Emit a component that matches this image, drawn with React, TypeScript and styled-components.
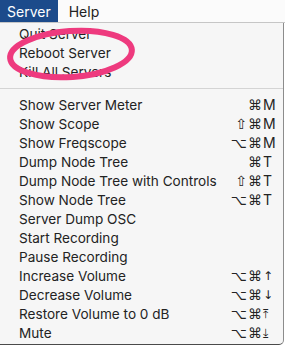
import React from "react";
import styled, { createGlobalStyle } from "styled-components";

const Global = createGlobalStyle`
  html, body { margin: 0; padding: 0; background: #ffffff; }
  body { font-family: "Inter", "Noto Sans", "DejaVu Sans", sans-serif; -webkit-font-smoothing: antialiased; }
`;

const Screen = styled.div`
  position: relative;
  width: 285px;
  height: 347px;
  overflow: hidden;
  background: #ffffff;
`;

const MenuBar = styled.div`
  display: flex;
  height: 22px;
  background: #fbfbfb;
  border-bottom: 1px solid #c6c6c6;
`;

const BarItem = styled.div<{ $active?: boolean }>`
  display: flex;
  align-items: center;
  padding: 0 7px 0 7px;
  margin-right: 4px;
  font-size: 14px;
  color: ${(p) => (p.$active ? "#ffffff" : "#222222")};
  background: ${(p) => (p.$active ? "#1c4b8b" : "transparent")};
`;

const Panel = styled.div`
  width: 283px;
  background: #f6f6f6;
  border-right: 1px solid #8c8c8c;
  border-bottom: 1px solid #4a4a4a;
  border-bottom-right-radius: 5px;
  padding: 1px 0 2px 0;
`;

const Row = styled.div`
  display: flex;
  align-items: center;
  height: 19px;
  padding: 0 6px 0 19px;
  font-size: 13.6px;
  color: #232323;
`;

const Label = styled.span`
  flex: 1;
  white-space: nowrap;
`;

const Shortcut = styled.span`
  display: flex;
  align-items: center;
`;

const Mods = styled.span`
  font-family: "DejaVu Sans", sans-serif;
  font-size: 14px;
  text-align: right;
  letter-spacing: 1px;
`;

const Key = styled.span`
  width: 14px;
  text-align: left;
  font-size: 14px;
`;

const ArrowKey = styled(Key)`
  font-family: "DejaVu Sans", sans-serif;
  font-size: 12px;
`;

const Separator = styled.div`
  height: 1px;
  background: #d4d4d4;
  margin: 7px 0 6px 0;
`;

const Circle = styled.svg`
  position: absolute;
  left: 0;
  top: 20px;
  pointer-events: none;
`;

type Item = { label: string; mods?: string; key?: string; arrow?: boolean };

const top: Item[] = [
  { label: "Quit Server" },
  { label: "Reboot Server" },
  { label: "Kill All Servers" },
];

const rest: Item[] = [
  { label: "Show Server Meter", mods: "⌘", key: "M" },
  { label: "Show Scope", mods: "⇧⌘", key: "M" },
  { label: "Show Freqscope", mods: "⌥⌘", key: "M" },
  { label: "Dump Node Tree", mods: "⌘", key: "T" },
  { label: "Dump Node Tree with Controls", mods: "⇧⌘", key: "T" },
  { label: "Show Node Tree", mods: "⌥⌘", key: "T" },
  { label: "Server Dump OSC" },
  { label: "Start Recording" },
  { label: "Pause Recording" },
  { label: "Increase Volume", mods: "⌥⌘", key: "↑", arrow: true },
  { label: "Decrease Volume", mods: "⌥⌘", key: "↓", arrow: true },
  { label: "Restore Volume to 0 dB", mods: "⌥⌘", key: "⤒", arrow: true },
  { label: "Mute", mods: "⌥⌘", key: "⤓", arrow: true },
];

const MenuRow = ({ item }: { item: Item }) => (
  <Row>
    <Label>{item.label}</Label>
    {item.mods && (
      <Shortcut>
        <Mods>{item.mods}</Mods>
        {item.arrow ? <ArrowKey>{item.key}</ArrowKey> : <Key>{item.key}</Key>}
      </Shortcut>
    )}
  </Row>
);

export default function App() {
  return (
    <Screen>
      <Global />
      <MenuBar>
        <BarItem $active>Server</BarItem>
        <BarItem>Help</BarItem>
      </MenuBar>
      <Panel>
        {top.map((it) => (
          <MenuRow key={it.label} item={it} />
        ))}
        <Separator />
        {rest.map((it) => (
          <MenuRow key={it.label} item={it} />
        ))}
      </Panel>
      <Circle width="150" height="70" viewBox="0 0 150 70">
        <ellipse
          cx="71"
          cy="34"
          rx="61"
          ry="23"
          fill="none"
          stroke="#ee3a7e"
          strokeWidth="6"
          transform="rotate(-4 71 34)"
        />
      </Circle>
    </Screen>
  );
}
